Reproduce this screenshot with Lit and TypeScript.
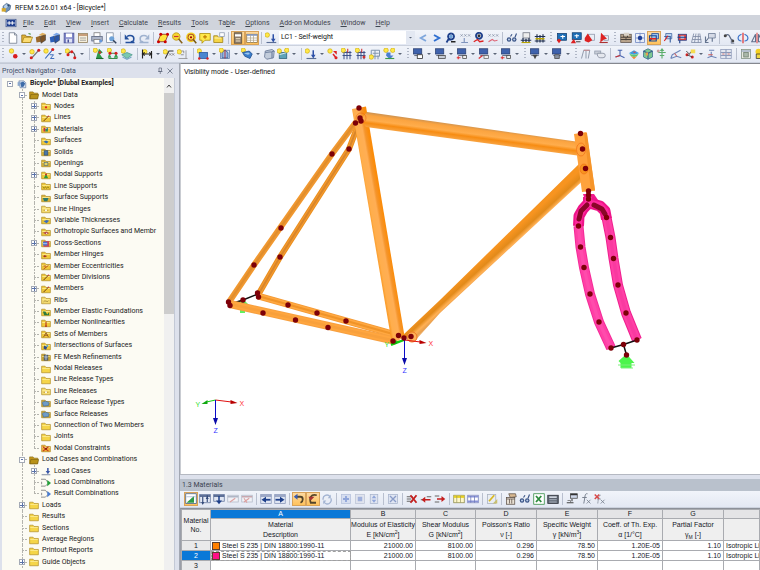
import { LitElement, html, svg, css, nothing } from "lit";
import { customElement, property } from "lit/decorators.js";

type Glyph = unknown;

/* Shared pieces of the 16 x 16 icon grid */
const star = (x = 3, y = 3): Glyph => svg`<circle cx=${x} cy=${y} r="3" fill="#ffe84a" stroke="#c9a800" stroke-width=".8"/>`;
const line = (d: string, c = "#3b4a66", w = 1.5): Glyph => svg`<path d=${d} stroke=${c} stroke-width=${w} fill="none"/>`;
const fill = (d: string, c: string, s = "none"): Glyph => svg`<path d=${d} fill=${c} stroke=${s}/>`;
const dot = (x: number, y: number, c = "#d81e1e", r = 2): Glyph => svg`<circle cx=${x} cy=${y} r=${r} fill=${c}/>`;
const box = (x: number, y: number, w: number, h: number, c: string, s = "none"): Glyph =>
  svg`<rect x=${x} y=${y} width=${w} height=${h} fill=${c} stroke=${s}/>`;
const folderBase = (c = "#f0c93a"): Glyph =>
  svg`<path d="M1 3.5h5.500l1.500 2h7v8.500h-14z" fill=${c} stroke="#a8841a"/><path d="M2 6.500h12v1.500h-12z" fill="#fbe98c"/>`;

const monitor = (low: Glyph): Glyph => [box(2, 1, 11, 7, "#3f62ac", "#2a3f70"), line("M3 10h10", "#6c7488", 1.5), low];
const loadGrid = (c: string): Glyph => [line("M2 6h12M2 10h12M4 4v11M8 4v11M12 4v11", c, 1.3), line("M9 1v5", "#c22", 1.3)];
const cube = (a: string, b: string, c: string): Glyph => [
  fill("M1 7l6-2 1 8-6 1z", a), fill("M5 4l5-3 5 2-4 3z", b), fill("M7 6l7-2v7l-6 4z", c, "#333a"),
];

const icons: Record<string, Glyph> = {
  app: [fill("M3 6l5-4 6 3-1 6-6 4-4-4z", "#6f92b8", "#3d5a80"), fill("M4 6l4-3 2 4-4 3z", "#b8d2ec"), box(1, 9, 6, 5, "#d8a928"), dot(11, 5, "#2d476b", 1.5)],
  mdi: [box(0, 2, 16, 12, "#fff", "#1f3a7a"), box(1, 3, 14, 10, "#1f3f8f"), line("M2 8h12M5 5v6M10 5v6", "#fff", 1.6)],
  page: [fill("M3 1h7l3 3v11h-10z", "#fff", "#6b7688"), line("M10 1v3h3", "#6b7688", 1)],
  open: [fill("M1 4h5l1 2h6v8h-12z", "#e3b43a", "#8a6b1a"), fill("M4 7h11.500l-3 7h-11z", "#fbdc74", "#a8841a"), line("M10 2l3 1", "#3c8f3c")],
  boxBrown: cube("#9b6a2c", "#e0b060", "#7e5426"),
  boxBlue: cube("#2c5fb8", "#7aa7ea", "#2a56a8"),
  save: [box(1.5, 1.5, 13, 13, "#7f86c8", "#4b5296"), box(4, 2, 8, 5, "#fff"), box(4, 9, 8, 5, "#dfe3f5"), box(6, 10, 2, 4, "#4b5296")],
  list: [box(2, 2, 12, 12, "#f6efdc", "#8b7752"), line("M2 4h12", "#b7835a", 2), line("M4 8h8M4 11h8", "#8b8b8b", 1)],
  print: [box(4, 1, 8, 5, "#fff", "#777"), box(1, 6, 14, 6, "#aeb6c9", "#5c6780"), box(4, 10, 8, 5, "#fff", "#777"), dot(13, 12, "#6699dd", 2)],
  preview: [fill("M2 1h9v13h-9z", "#fff", "#7c8799"), dot(9, 9, "#6fa3d8", 3.4), line("M11 11l4 4", "#31415c", 2)],
  undo: [line("M4 6c4-3 10-1 9 4c0 2-2 3-4 3M2 14h12", "#24509c", 2), fill("M1 3v7h6z", "#24509c")],
  redo: [line("M12 6c-4-3-10-1-9 4c0 2 2 3 4 3M2 14h12", "#9fb2cf", 2), fill("M15 3v7h-6z", "#9fb2cf")],
  para: [fill("M5 3h10l-4 10h-10z", "#ffe63d", "#7a1d1d"), dot(5, 3, "#c00"), dot(14, 3, "#c00"), dot(11, 13, "#c00"), dot(2, 13, "#c00")],
  lens: [dot(7, 6, "#f7d531", 5), line("M7 1a5 5 0 1 0 .1 0", "#b48f14", 1), line("M10 9l5 6", "#87631d", 2), line("M4 6h6", "#c33")],
  target: [dot(8, 7, "#f3d020", 6.5), dot(8, 7, "#b0552a", 4.600), dot(8, 7, "#ffe84a", 3.200), dot(8, 7, "#a00", 1.5), line("M11 10l4 5", "#7a5a10", 2)],
  note: [fill("M1 2h14v9h-7l-4 4v-4h-3z", "#ffe84a", "#a88a00"), line("M8 4v5M5.500 6.500h5", "#c07a00")],
  folderNew: [fill("M1 5h5l1 2h6v7h-12z", "#f5d548", "#9c7e10"), box(9, 1, 6, 5, "#fff", "#8b98ad"), line("M2 8h9", "#fff2a8")],
  calc: [box(3, 1, 10, 14, "#8c7c6a", "#5d4e3c"), box(4, 3, 8, 3, "#fff"), line("M5 9h6M5 12h6", "#f5e6c8", 1.6)],
  grid: [box(1, 3, 14, 11, "#fff", "#8b6f3d"), line("M1 4h14", "#7a93c4", 2), line("M1 8h14M1 11h14M6 4v10M10 4v10", "#b1a58c", 1)],
  loadArrow: [star(3, 4), line("M2 14h13", "#5b6f96"), line("M11 3v8", "#2c50a8", 2), fill("M8 9h6l-3 5z", "#2c50a8")],
  prev: [line("M12 4l-7 4l7 4", "#7fa7dc", 2.4)],
  next: [line("M4 4l7 4l-7 4", "#2f6fd0", 2.600)],
  mag: [line("M8 2a4 4 0 1 0 .1 0M5 9l-3 5", "#1d3f8a", 2.4), dot(8, 6, "#6fa3d8", 2.4), box(8, 12, 6, 2, "#222")],
  xxx: [line("M2 3l3 3M5 3l-3 3M7 3l3 3M10 3l-3 3M12 3l3 3M15 3l-3 3", "#8a94a8", 1), line("M3 14h9M7 8v6", "#7f94bd")],
  magRed: [line("M8 1a4 4 0 1 0 .1 0", "#1d3f8a", 2.4), dot(8, 5, "#333", 2), line("M1 13l5-3 3 3 5-1", "#d22", 1.8)],
  xxxRed: [line("M2 3l3 3M5 3l-3 3M7 3l3 3M10 3l-3 3M12 3l3 3M15 3l-3 3", "#8a94a8", 1), line("M2 13l5-3 3 2 4-1", "#d67", 1.5)],
  glasses: [dot(4, 10, "#3a5486", 3), dot(11, 10, "#3a5486", 3), dot(4, 10, "#b9cbe8", 1.4), dot(11, 10, "#b9cbe8", 1.4), line("M6 6l2-3M12 7l2-5", "#3a5486")],
  glassList: [box(4, 1, 9, 7, "#eee", "#6a6f7c"), line("M1 11h14M4 8v6M8 9v5M12 8v6", "#1f2e4f", 1.6), line("M2 14h12", "#b8a400")],
  meshGlass: [line("M1 6h14M1 12h14M4 3v11M8 4v10M12 3v11", "#1f2e4f", 1.5), line("M2 9h12", "#b8a400", 2)],
  winA: [box(2, 2, 12, 9, "#1d6fb8", "#0f3d6e"), line("M6 6h6M9 4v5", "#fff"), fill("M1 11l3-2 3 2-3 4z", "#d22")],
  winB: [box(3, 1, 12, 9, "#1d6fb8", "#0f3d6e"), line("M6 5h6M9 3v5", "#fff"), fill("M1 15l4-6 3 6z", "#d22"), line("M8 13h6", "#555")],
  redA: [box(6, 3, 8, 8, "#e9edf5", "#8a94a8"), fill("M1 8l4-6 4 6 2 3-5 3-5-2z", "#d22")],
  redB: [box(8, 5, 6, 6, "#e9edf5", "#8a94a8"), fill("M4 1l8 8-4 1-5 4z", "#d22"), line("M2 14h11", "#a33")],
  brick: [box(1, 3, 14, 11, "#b9a48c", "#5d5249"), line("M1 7h14M1 10h14M5 3v4M10 3v4M8 7v4", "#4a423c", 1.3), box(5, 1, 7, 4, "#d9d2c8")],
  gridDots: [line("M2 2h12M2 8h12M2 14h12M2 2v12M8 1v14M14 2v12", "#7e93c8", 1.2), dot(8, 8, "#1d3f9a", 3)],
  viewBlue: [fill("M5 2h9v7h-9z", "#9ec3ec", "#184a96"), line("M2 5h9v7h-9zM2 12l3-3", "#184a96"), line("M2 9h9", "#d22", 2)],
  viewRed: [fill("M5 2h8v7h-8z", "#bcd4ef", "#3b62a2"), line("M3 6h8v8", "#3b62a2"), line("M3 12l5-7", "#d22")],
  viewX: [box(3, 3, 11, 8, "#e6403a", "#1d3f8a"), box(6, 5, 5, 4, "#bcd4ef"), line("M5 11v4M2 7h12", "#1d3f8a")],
  mesh: [line("M2 14l3-12M6 14l2-12M11 14V2M15 14l-2-12M2 14h13M3 10h12M4 6h10", "#7e8ba4", 1.1)],
  persp: [fill("M6 2h9v6h-9z", "#d5dae6", "#64748f"), line("M2 13l4-5M2 6v8h4M11 8v5", "#64748f")],
  curve: [line("M3 5c8-6 5 8 11 6", "#5d6a84", 1.6), dot(3, 5, "#444"), dot(13, 12, "#444"), line("M11 11v4h4", "#5d6a84", 1)],
  rot: [line("M8 1v14", "#d22"), line("M6 3c-7 3-5 9 0 9M10 3c7 3 5 9 0 9", "#3b72c8", 1.6)],
  mirror: [line("M8 1v14", "#d22", 1.2), line("M6 3v10h-5zM10 3v10h5z", "#61708c", 1.4)],
  node: [star(6, 4), dot(11, 11, "#d81e1e", 3)],
  line1: [star(4, 5), line("M3 14L13 3", "#777"), dot(3, 13), dot(13, 3)],
  line2: [star(4, 4), line("M3 14L13 2", "#2f62b8"), line("M9 9h5l-4 5h5", "#2f62b8", 1.2), dot(13, 2)],
  arc: [star(3, 4), line("M4 9C6 2 14 5 13 13", "#555"), dot(4, 9), dot(9, 5), dot(13, 13)],
  supp1: [star(3, 3), fill("M8 1l5 5-4 2 4 6h-9l2-7z", "#2f9a48"), dot(9, 6, "#d22", 1.6), line("M4 14h10", "#1d6b30")],
  supp2: [star(3, 3), fill("M3 7l3 6h-5zM12 7l3 6h-6z", "#3aa052"), line("M4 7h8M2 14h12", "#3b8a48"), dot(4, 7), dot(12, 7)],
  supp3: [star(3, 4), fill("M1 9l7-3 7 3-7 5z", "#7cc8b0", "#4f9a8c"), line("M2 12l6 3 6-3", "#7aa7c8")],
  dim: [star(5, 5), line("M2 2v12M14 4v10M2 8h12", "#222"), line("M5 6l-3 2 3 2M11 6l3 2-3 2", "#222")],
  dimX: [star(3, 5), line("M3 14L8 4h6", "#333"), line("M8 7l3 3M11 7l-3 3M12 7l3 3M15 7l-3 3", "#777", 1)],
  dimG: [star(3, 5), line("M2 14h12M12 3v11", "#888", 1), line("M6 4h3v3M5 9h4", "#777", 1)],
  surf: [star(3, 4), box(3, 6, 11, 8, "#4a86cf", "#24539a"), dot(14, 14, "#d22", 1.6), dot(3, 14, "#d22", 1.6)],
  solid: [box(2, 3, 12, 11, "#dfe7f3", "#5d7aa8"), fill("M4 6l4-3 4 3v7h-8z", "#8fb2e0", "#33578f"), line("M8 2v12", "#c22", 1), star(3, 3)],
  open2: [star(3, 3), fill("M2 6l9-2 4 4-3 6-7-3z", "#3a7cc8", "#1e4c8c"), fill("M4 7l6-1 2 2-3 1z", "#9cc7ef")],
  solid2: [fill("M3 4l9-2 3 2-1 9-9 2-3-3z", "#c2ccdb", "#5d6f8e"), line("M3 6l9-1 3-1M12 5v9", "#6d7f9e")],
  solidStar: [box(3, 6, 10, 8, "#5fa3b8", "#2c5f78"), line("M3 9l10-3", "#fff", 1), star(3, 4), star(13, 3)],
  force: [star(4, 4), line("M8 8l4 5", "#d22", 2), fill("M8 4h5v5z", "#d22"), dot(12, 13, "#d22")],
  lg1: [loadGrid("#3b4f88"), star()],
  lg2: [loadGrid("#3b4f88"), dot(12, 12, "#c33"), star()],
  lg3: [line("M3 3h11v8h-11zM5 7h8M8 3v12M12 10v5", "#7f94ad", 1.3), star(3, 12)],
  lg4: [star(4, 3), star(13, 3), fill("M5 6h5v4h4l-5 5-5-5z", "#4a7fd0"), line("M3 14h12", "#3a9a48")],
  mon1: monitor(box(7, 9, 7, 5, "#fff", "#222")),
  mon2: monitor(box(6, 10, 9, 4, "#c7ccd6", "#444")),
  mon3: monitor([box(9, 10, 5, 4, "#eee", "#444"), line("M3 11v4M1 13h5", "#d33")]),
  mon4: monitor([box(8, 10, 6, 4, "#eee", "#666"), line("M1 14l5-4", "#d33")]),
  mon5: monitor(fill("M5 9h6l-3 6z", "#444")),
  mon6: monitor(box(5, 9, 6, 5, "#8b93a2", "#444")),
  frame: [line("M2 14L5 3h8l-2 11M8 14V4", "#8f99aa", 1.3), line("M5 3h8", "#c77", 1)],
  pill: [box(1, 4, 8, 4, "#c9ced8", "#8f99aa"), fill("M5 7h7a3 3 0 0 1 0 6h-3a4 4 0 0 1-4-6z", "#e4e7ee", "#7f8798")],
  axes: [line("M2 12l6-2 6 3M8 3v8M5 3h6", "#4a66b0"), line("M2 12l6-2", "#c33")],
  rainbow: [fill("M1 7l7-4 7 4-7 2z", "#3f9de0"), fill("M2 8l6 1 6-1-2 3-4 1-4-1z", "#5cc870"), fill("M4 11l4 1 4-1-4 4z", "#f08c3a"), fill("M6 5h5l-2 2z", "#e04a4a")],
  cubeGreen: [fill("M2 4l6-3 6 3v8l-6 3-6-3z", "#7cc890", "#3a6b8f"), line("M2 4l6 3 6-3M8 7v8", "#3a5f8f"), box(5, 6, 3, 4, "#e8a04a")],
  tree: [line("M8 3v11M3 6h10M5 10h6", "#5cae6c"), fill("M8 0l3 4h-6z", "#5cae6c"), dot(3, 4, "#c9a0a0")],
  slope: [line("M3 9l11-6M1 14l8-3 6 2M3 9l-2 5", "#6d85b8"), line("M6 7l3 4", "#c66")],
  spark: [dot(4, 9), dot(11, 12), line("M4 9l7 3M3 4l4 4M9 5l-2 4", "#444", 1.2), box(9, 2, 6, 5, "#f5dc50")],
  axes2: [line("M2 13l5-2 7 2M7 5v6M4 3h7", "#6d85b8"), line("M3 9h6", "#c66")],
  table2: [box(1, 2, 14, 12, "#e3e7f0", "#8c98b8"), line("M1 6h14M1 10h14M8 2v12", "#8c98b8"), line("M3 8h3M10 8h3", "#c77")],
  panel: [box(2, 2, 12, 12, "#e7e9e0", "#7f8f7f"), box(5, 6, 6, 6, "#aab8aa", "#6b7b6b"), line("M2 4h12", "#8f9fbf")],
  bulb: [dot(6, 5, "#f5d020", 4), fill("M3 8h10l2 6h-12z", "#f0d840", "#333")],
  tEdit: [box(1, 1, 14, 13, "#fff", "#3b5d8f"), fill("M2 13L12 4v9z", "#2f9a48"), line("M2 5h12", "#9fb2cf", 1)],
  tCol: [box(1, 2, 14, 11, "#e5eaf5", "#5d7099"), line("M1 4h14", "#334a7a", 2), line("M5 5v9M11 3v9", "#334a7a"), fill("M3 12l2 4 2-4zM9 8l2-4 2 4z", "#334a7a")],
  tDown: [box(1, 2, 14, 9, "#dfe5f2", "#5d7099"), line("M1 4h14", "#334a7a", 2), line("M8 4v8", "#1d3f8a", 2), fill("M4 10h8l-4 5z", "#1d3f8a")],
  tRow: [box(1, 3, 14, 9, "#f0f2f7", "#b0b7c6"), line("M1 5h14", "#b0b7c6", 2), line("M4 12l7-5", "#dca0a0")],
  tRowX: [box(1, 3, 14, 9, "#f0f2f7", "#b0b7c6"), line("M1 5h14", "#c8a8b0", 2), line("M4 12l7-5M4 7l4 6", "#dca0a0")],
  tLeft: [box(1, 2, 14, 12, "#dfe5f2", "#8794b8"), line("M1 4h14", "#8794b8", 2), line("M5 9h9", "#1d3f8a", 2.4), fill("M8 5v8l-6-4z", "#1d3f8a")],
  tRight: [box(1, 2, 14, 12, "#dfe5f2", "#8794b8"), line("M1 4h14", "#8794b8", 2), line("M2 9h9", "#1d3f8a", 2.4), fill("M8 5v8l6-4z", "#1d3f8a")],
  swirlA: [line("M3 5h7c4 0 4 6 0 8", "#54452a", 2.4), fill("M6 1v8l-5-4z", "#3b5db0")],
  swirlB: [line("M13 3c-8-2-10 4-8 10h7", "#54452a", 2.4), fill("M2 5h8l-5 5z", "#a83232")],
  cycle: [line("M3 9a5 5 0 0 1 9-4M13 7a5 5 0 0 1-9 5", "#a3b4d2", 1.8), fill("M13 2v5h-4zM3 15v-5h4z", "#a3b4d2")],
  pPlus: [box(2, 2, 12, 12, "#d6def0", "#b4c0dc"), line("M8 4v8M4 8h8", "#8fa5da", 2.4)],
  pBars: [box(2, 2, 12, 12, "#e0e4ee", "#bcc4d6"), box(5, 5, 6, 6, "#9fb0dc")],
  pSort: [box(3, 2, 10, 12, "#dfe4f0", "#a8b4cc"), fill("M8 3l3 4h-6zM8 13l3-4h-6z", "#8fa5da")],
  pX: [box(2, 2, 12, 12, "#dfe5f2", "#a8b4cc"), line("M4 4l8 8M12 4l-8 8", "#8a9cc8", 1.8)],
  rowDel: [line("M1 5h8M1 8h6M1 11h8", "#666", 1.6), line("M6 3l8 10M14 3L6 13", "#c41e1e", 2.4)],
  rowIn: [line("M9 5h6M1 9h4", "#666", 1.6), line("M6 9h8", "#c41e1e", 2), fill("M7 5v8l-5-4z", "#c41e1e")],
  rowOut: [line("M1 4h6M1 12h6", "#666", 1.6), line("M4 8h8", "#c41e1e", 2), fill("M10 4v8l5-4z", "#c41e1e")],
  tYel: [box(1, 3, 14, 10, "#fff8c8", "#8a8a4a"), line("M1 5h14", "#e8d020", 3), line("M5 4v9M10 4v9", "#9c9c6a", 1)],
  tBlu: [box(1, 3, 14, 10, "#fff", "#6d78b8"), line("M1 5h14M1 11h14", "#8a94d8", 2), line("M5 4v9M10 4v9", "#6d78b8", 1)],
  pen: [box(2, 2, 11, 12, "#e9edf2", "#a7b0bf"), line("M4 11l7-8", "#d8b820", 2.4), fill("M9 14h6v-6z", "#c8c070")],
  hand: [box(2, 6, 11, 9, "#e8e0d4", "#5d5248"), line("M2 8h11M6 8v6M9 8v6", "#5d5248", 1), fill("M5 1h9l1 4-8 1z", "#d8b890", "#5d5248")],
  excel: [box(1, 1, 14, 14, "#fff", "#2a8a3c"), line("M4 4l7 8M11 4l-7 8", "#2a8a3c", 2.4)],
  calc2: [box(1, 3, 14, 11, "#5d6470", "#2c3038"), line("M3 5.500h10", "#dfe5ee", 2), line("M3 9h10M3 12h10", "#b8c0cc", 1.2)],
  tFx: [box(6, 1, 9, 6, "#cfd8ea", "#444"), line("M6 2h9", "#333", 2), line("M8 8v3M1 13h9", "#444"), line("M2 10h4v3", "#666", 1)],
  fx: [line("M10 1c-4-1-3 4-5 13M3 6h6", "#777f8e", 1.3), line("M9 9l5 5M14 9l-5 5", "#777f8e", 1.1)],
  fxX: [line("M9 3c-3-1-3 4-4 11M4 8h5", "#9aa1ae", 1.3), line("M9 9l5 5M14 9l-5 5", "#777f8e", 1.1), line("M1 2l6 6M7 2L1 8", "#d84a4a", 2)],
  /* navigator */
  model: [fill("M3 3h8l3 3v8h-9z", "#dfe8f4", "#54709c"), fill("M5 6l5-2 3 3-2 5-4 1z", "#3d6ca8"), box(1, 5, 4, 6, "#8ca8cc")],
  folder: folderBase("#f5d548"),
  folderOpen: [fill("M1 3h5.500l1.500 2h6v9h-13z", "#c59a1e", "#8a6b12"), fill("M3 7h12.500l-2 7h-12z", "#b8921a", "#7a5e10")],
  fNode: [folderBase(), dot(8, 10, "#d22", 1.8)],
  fLine: [folderBase(), line("M4 13l8-8", "#6b3c10", 1.6), dot(12, 5, "#c44", 1.2)],
  fMat: [folderBase(), box(4, 6, 3, 6, "#c8323c"), box(7, 8, 4, 4, "#2c8a5c"), box(9, 6, 2, 3, "#2c62b8")],
  fSurf: [folderBase(), fill("M4 9l4-2 4 2-3 3z", "#2c6cb8")],
  fSolid: [folderBase("#d6b23a"), box(5, 6, 6, 7, "#4a78a8", "#2a4a70")],
  fOpen: [folderBase("#d6b23a"), box(5, 7, 6, 5, "#e3d36a", "#4a6a80")],
  fSupp: [folderBase(), fill("M8 6l3.500 7h-7z", "#2c9a3c"), dot(8, 7, "#c22", 1.5)],
  fLSup: [folderBase(), line("M3 9l2 3 2-3 2 3 2-3 2 3", "#8a7a10", 1.2)],
  fSSup: [folderBase("#d6b23a"), fill("M3 8h9l-2 5h-5z", "#2c7a6c")],
  fHinge: [folderBase("#f5dc70"), line("M4 10h8", "#b08828", 1.2), dot(8, 10, "#fff", 1.6)],
  fThick: [folderBase("#e8c63a"), fill("M4 10l5-2 4 1-4 4z", "#3a6cc0")],
  fOrtho: [folderBase("#e8c63a"), fill("M3 9l6-2 4 3-5 2z", "#b84a4a"), dot(9, 10, "#fff", 1)],
  fCross: [folderBase(), box(4, 5, 9, 9, "#c8465a"), box(3, 6, 7, 6, "#4a78d0"), line("M3 9h7", "#dfe8ff", 1)],
  fMH: [folderBase(), line("M4 10h5", "#a02c2c", 1.4), dot(6, 10, "#a02c2c", 1.8)],
  fEcc: [folderBase(), line("M4 13l8-6M4 8h4", "#b84a1c", 1.5)],
  fRib: [folderBase("#f5dc70"), line("M4 11c3-4 6 2 8-2", "#9a8438", 1.3)],
  fEl: [folderBase(), fill("M3 7h4l3 5 3-4v5h-8z", "#2c7a3c")],
  fNon: [folderBase(), line("M8 6v7", "#b83a1c", 1.8), dot(8, 13, "#b83a1c", 1.4)],
  fSets: [folderBase(), line("M4 13l4-7 4 7M6 10h5", "#8a4a1c", 1.3)],
  fInt: [folderBase(), fill("M5 7l5 3-2 4-4-2z", "#2c4a88"), dot(10, 8, "#4aa0d8", 1.6)],
  fFE: [folderBase("#c9a83a"), box(5, 5, 6, 8, "#6f7f90", "#39465c"), line("M5 8h6M8 5v8", "#c4cfdd", 1)],
  fBlue: [folderBase("#c9a83a"), fill("M2 7l5-2 6 2-1 5-8 1z", "#6d9cc8", "#446a90")],
  fCon: [folderBase("#f0b43a"), line("M3 6l9 7M12 6l-9 7", "#c83a1c", 1.8), dot(8, 9, "#7a1c0c", 1.6)],
  lcase: [line("M1 14h14", "#7f8aa0", 1.6), line("M11 3v7", "#3a57a8", 2.4), fill("M7.500 8h7l-3.500 5z", "#3a57a8")],
  combG: [line("M0 2h7l4 5M0 13h7l4-4M1 6v4", "#777", 1.300), fill("M10 3l6 5-6 5z", "#25a03a")],
  combB: [line("M0 2h7l4 5M0 13h7l4-4M1 6v4", "#777", 1.300), fill("M10 3l6 5-6 5z", "#4a7cd0")],
  pin: [line("M6 2h5v7h-5zM4 9h9M8.500 9v5", "#5b6478", 1.4)],
  close: [line("M3 3l10 10M13 3L3 13", "#5b6478", 1.5)],
};

const icon = (name: string) => html`<svg class="icon" viewBox="0 0 16 16" aria-hidden="true">${icons[name]}</svg>`;

/* "|" separator, ":" grip, "v" drop-down arrow, "*" prefix marks a pressed button, "@" the load case list */
const mainBar = ": page open boxBrown boxBlue save list print preview | undo redo | para lens target note folderNew | *calc *grid | loadArrow @ prev next mag xxx magRed xxxRed | glasses glassList meshGlass : winA winB redA redB : brick gridDots *viewBlue viewRed viewX mesh persp | curve rot mirror".split(" ");
const editBar = ": node v line1 line2 v arc v | supp1 supp2 supp3 | dim v dimX dimG | surf v solid v open2 v solid2 solidStar v | loadArrow v force lg1 lg2 lg3 lg4 v : mon1 v mon2 v mon3 v mon4 v mon3 v : mon5 v mon6 v : frame pill | axes rainbow cubeGreen tree slope spark v axes2 table2 | panel bulb".split(" ");
const tableBar = ": *tEdit tCol tDown tRow tRowX | tLeft tRight | *swirlA *swirlB cycle | pPlus pBars pSort | pX | rowDel rowIn rowOut | tYel tBlu | pen | hand glasses excel calc2 | tFx fx fxX".split(" ");

@customElement("tool-bar")
class ToolBar extends LitElement {
  @property({ attribute: false }) items: string[] = [];

  static styles = css`
    :host { display: flex; align-items: center; overflow: hidden; box-sizing: border-box; height: 16px; --sep: 5px; --grip: 8px;
      background: linear-gradient(#f1f4fa, #e3e8f3); border-bottom: 1px solid #ccd2de; }
    :host([dense]) { height: 17px; --sep: 6px; --grip: 7px; }
    :host([inset]) { height: 17px; }
    button { display: flex; align-items: center; justify-content: center; flex: none; box-sizing: border-box; width: 14px; height: 14px;
      padding: 0; border: 1px solid transparent; background: none; }
    button.on { background: linear-gradient(#fdd9a0, #ffc25c); border-color: #d9a35a; }
    button.drop { width: 8px; }
    .icon { flex: none; width: 12px; height: 12px; }
    .tiny { flex: none; width: 4px; height: 2px; background: #5b6577; clip-path: polygon(0 0, 100% 0, 50% 100%); }
    .sep { flex: none; width: var(--sep); height: 12px; background: linear-gradient(#b9c0cf, #b9c0cf) center / 1px 100% no-repeat; }
    .grip { flex: none; width: var(--grip); height: 12px;
      background: repeating-linear-gradient(#b0b7c6 0 1px, transparent 1px 3px) center / 2px 100% no-repeat; }
    .grip.first { width: 6px; }
    :host([inset]) .grip.first { width: 4px; background: none; }
    .pick { position: relative; display: flex; flex: none; width: 136px; height: 13px; margin: 0 1px; }
    .pick select { flex: 1; appearance: none; border: 0; margin: 0; padding: 0 10px 0 2px; background: #fff; border-radius: 0;
      font: 7px/13px Roboto, "Open Sans", sans-serif; color: #111; }
    .pick .well { position: absolute; right: 0; top: 0; display: flex; align-items: center; justify-content: center;
      width: 9px; height: 13px; background: #e3e8f2; pointer-events: none; }
  `;

  private item(name: string, i: number) {
    if (name === "|") return html`<span class="sep"></span>`;
    if (name === ":") return html`<span class="grip ${i === 0 ? "first" : ""}"></span>`;
    if (name === "v") return html`<button class="drop" aria-label="More"><span class="tiny"></span></button>`;
    if (name === "@")
      return html`<label class="pick"><select aria-label="Load case"><option>LC1 - Self-weight</option></select>
        <span class="well"><span class="tiny"></span></span></label>`;
    const on = name.startsWith("*");
    const key = on ? name.slice(1) : name;
    return html`<button class=${on ? "on" : nothing} aria-label=${key}>${icon(key)}</button>`;
  }

  render() {
    return this.items.map((n, i) => this.item(n, i));
  }
}

type Row = [depth: number, sign: string, glyph: string, text: string];
const rows: Row[] = [
  [0, "-", "model", "Bicycle* [Dlubal Examples]"],
  [1, "-", "folderOpen", "Model Data"],
  [2, "+", "fNode", "Nodes"],
  [2, "+", "fLine", "Lines"],
  [2, "+", "fMat", "Materials"],
  [2, "", "fSurf", "Surfaces"],
  [2, "", "fSolid", "Solids"],
  [2, "", "fOpen", "Openings"],
  [2, "+", "fSupp", "Nodal Supports"],
  [2, "", "fLSup", "Line Supports"],
  [2, "", "fSSup", "Surface Supports"],
  [2, "", "fHinge", "Line Hinges"],
  [2, "", "fThick", "Variable Thicknesses"],
  [2, "", "fOrtho", "Orthotropic Surfaces and Membr"],
  [2, "+", "fCross", "Cross-Sections"],
  [2, "", "fMH", "Member Hinges"],
  [2, "", "fEcc", "Member Eccentricities"],
  [2, "", "fLine", "Member Divisions"],
  [2, "+", "fLine", "Members"],
  [2, "", "fRib", "Ribs"],
  [2, "", "fEl", "Member Elastic Foundations"],
  [2, "", "fNon", "Member Nonlinearities"],
  [2, "", "fSets", "Sets of Members"],
  [2, "", "fInt", "Intersections of Surfaces"],
  [2, "", "fFE", "FE Mesh Refinements"],
  [2, "", "folder", "Nodal Releases"],
  [2, "", "folder", "Line Release Types"],
  [2, "", "fHinge", "Line Releases"],
  [2, "", "fBlue", "Surface Release Types"],
  [2, "", "fBlue", "Surface Releases"],
  [2, "", "folder", "Connection of Two Members"],
  [2, "", "folder", "Joints"],
  [2, "", "fCon", "Nodal Constraints"],
  [1, "-", "folderOpen", "Load Cases and Combinations"],
  [2, "+", "lcase", "Load Cases"],
  [2, "", "combG", "Load Combinations"],
  [2, "", "combB", "Result Combinations"],
  [1, "+", "folder", "Loads"],
  [1, "", "folder", "Results"],
  [1, "", "folder", "Sections"],
  [1, "", "folder", "Average Regions"],
  [1, "", "folder", "Printout Reports"],
  [1, "+", "folder", "Guide Objects"],
];

@customElement("project-navigator")
class ProjectNavigator extends LitElement {
  static styles = css`
    :host { display: flex; flex-direction: column; min-height: 0; background: #dde1ec; border-right: 1px solid #a3a8b3;
      font: 7px/11px Roboto, "Open Sans", sans-serif; color: #1a1a1a; }
    header { display: flex; align-items: center; height: 14px; padding: 0 4px 0 2px; border-top: 1px solid #c3c9d6; color: #44506a; }
    header span { flex: 1; }
    header button { display: flex; padding: 0 1px; border: 0; background: none; }
    .icon { width: 10px; height: 10px; flex: none; }
    header .icon { width: 8px; height: 8px; }
    .body { flex: 1; min-height: 0; display: flex; margin: 0 4px 0 2px; border-right: 1px solid #c3c9d6; background: #fcfbf3; }
    .tree { flex: 1; min-width: 0; overflow: hidden; display: grid; grid-auto-rows: 1fr; margin: 0; padding: 0 0 2px 2px; list-style: none; }
    .row { display: flex; align-items: center; min-height: 0; white-space: nowrap; }
    .row.root { font-weight: 700; }
    .cell { flex: none; align-self: stretch; width: 12px; display: flex; align-items: center; justify-content: center; }
    .rail, .knot { background: repeating-linear-gradient(#b4b4ae 0 2px, transparent 2px 3px) 6px 0 / 1px 100% no-repeat; }
    .knot { background:
      repeating-linear-gradient(#b4b4ae 0 2px, transparent 2px 3px) 6px 0 / 1px 100% no-repeat,
      repeating-linear-gradient(90deg, #b4b4ae 0 2px, transparent 2px 3px) 6px 50% / 6px 1px no-repeat; }
    .knot.end { background-size: 1px 50%, 6px 1px; }
    .sign { box-sizing: border-box; width: 6px; height: 6px; border: 1px solid #a4aab6; background:
      linear-gradient(#5a72a8, #5a72a8) center / 2px 1px no-repeat, #fff; }
    .sign.plus { background: linear-gradient(#5a72a8, #5a72a8) center / 4px 1px no-repeat,
      linear-gradient(#5a72a8, #5a72a8) center / 1px 4px no-repeat, #fff; }
    .text { padding-left: 2px; }
    .scroll { flex: none; width: 10px; display: flex; flex-direction: column; background: #f0f0f0; }
    .up { height: 15px; display: flex; align-items: center; justify-content: center; }
    .up svg { width: 6px; height: 4px; }
    .thumb { height: 45%; background: #cdcdcd; }
  `;

  render() {
    return html`
      <header>
        <span>Project Navigator - Data</span>
        <button aria-label="Auto hide">${icon("pin")}</button>
        <button aria-label="Close">${icon("close")}</button>
      </header>
      <div class="body">
        <ul class="tree">
          ${rows.map(([depth, sign, glyph, text], i) => {
            const last = (rows[i + 1]?.[0] ?? 1) < depth;
            return html`<li class="row ${depth === 0 ? "root" : ""}">
              ${depth > 0 ? html`<span class="cell"></span>` : nothing}
              ${depth > 1 ? html`<span class="cell rail"></span>` : nothing}
              <span class="cell ${depth > 0 ? "knot" : ""} ${last && depth > 1 ? "end" : ""}">
                ${sign ? html`<span class="sign ${sign === "+" ? "plus" : ""}"></span>` : nothing}
              </span>
              <span class="cell">${icon(glyph)}</span><span class="text">${text}</span>
            </li>`;
          })}
        </ul>
        <div class="scroll">
          <div class="up"><svg viewBox="0 0 6 4"><path d="M1 3.500L3 1l2 2.500" fill="none" stroke="#444"/></svg></div>
          <div class="thumb"></div>
        </div>
      </div>`;
  }
}

const orangeNodes = [
  [359, 108], [360, 118], [361, 121], [355.5, 123], [349, 149], [332, 154], [281, 228], [254, 265], [280, 257],
  [228.5, 302], [230, 305.5], [243, 300], [257.5, 293], [258.5, 297], [263, 313], [295.5, 320], [328, 327.5],
  [288, 305], [317, 313], [346, 321], [393, 341], [398.5, 335.5], [404, 338], [411, 336.5],
  [580.5, 133.5], [582.5, 149], [585.5, 168.5],
];
const forkNodes = [
  [588.5, 191], [588.5, 195], [588.5, 199], [578.5, 226], [580.5, 247], [584, 267.5], [590, 294], [599, 322], [611, 348],
  [606.5, 217.5], [610.5, 237.5], [613.5, 258.5], [618, 285], [626, 313], [637, 340], [623.5, 344.5], [626.5, 355],
];
const leftBlade = "M578.5 226L580.5 247L584 267.5L590 294L599 322L611 348";
const rightBlade = "M606.5 217.5L610.5 237.5L613.5 258.5L618 285L626 313L637 340";
const crown = "M588.5 197v6L583 209L579 216L578.5 226M589 203L600 206L605 211L606.5 219";

const triad = (x: number, y: number) => svg`
  <g transform="translate(${x} ${y})" font-size="7" font-family="Liberation Sans, Arial, sans-serif">
    <path d="M0 0L16 2" stroke="#e01010"/><path d="M22 3l-7-3v4z" fill="#b80000"/>
    <path d="M0 0L-9 2" stroke="#10d010"/><path d="M-14 4l6-4v4z" fill="#10a810"/>
    <path d="M0 0V19" stroke="#0a0ac8"/><path d="M0 25l-2.500-7h5z" fill="#0a0aa8"/>
    <text x="24" y="6" fill="#ff3030">X</text><text x="-20" y="7" fill="#30e030">Y</text><text x="-2" y="33" fill="#3030ff">Z</text>
  </g>`;

/* A tube seen from the side: rim, body, and a band along its middle */
const tube = (d: string, w: number, rim: string, body: string, band: string) => svg`
  <path d=${d} stroke=${rim} stroke-width=${w} fill="none" stroke-linejoin="round"/>
  <path d=${d} stroke=${body} stroke-width=${w - 2} fill="none" stroke-linejoin="round"/>
  <path d=${d} stroke=${band} stroke-width=${w / 3} fill="none" stroke-linejoin="round"/>`;

@customElement("model-view")
class ModelView extends LitElement {
  static styles = css`
    :host { display: flex; flex-direction: column; min-height: 0; position: relative; overflow: hidden; background: #fff;
      border-top: 1px solid #85888f; border-left: 1px solid #c9ccd2; }
    .mode { position: absolute; left: 3px; top: 3px; font: 7px/10px "Liberation Sans", Arial, sans-serif; color: #111; }
    .scene { flex: 1; min-height: 0; width: 100%; display: block; }
  `;

  render() {
    return html`
      <span class="mode">Visibility mode - User-defined</span>
      <svg class="scene" viewBox="181 64 579 380" preserveAspectRatio="xMinYMin meet" role="img" aria-label="Bicycle frame model">
        <defs>
          <linearGradient id="top" gradientUnits="userSpaceOnUse" x1="470" y1="126" x2="468" y2="141">
            <stop offset="0" stop-color="#cf9350"/><stop offset=".2" stop-color="#fba440"/><stop offset=".5" stop-color="#ffad4c"/>
            <stop offset=".7" stop-color="#f78c12"/><stop offset="1" stop-color="#f8a545"/>
          </linearGradient>
          <linearGradient id="down" gradientUnits="userSpaceOnUse" x1="490" y1="252" x2="500" y2="263">
            <stop offset="0" stop-color="#f79420"/><stop offset=".4" stop-color="#e28a1a"/><stop offset=".65" stop-color="#ffb054"/>
            <stop offset=".85" stop-color="#e8a050"/><stop offset="1" stop-color="#f0bc80"/>
          </linearGradient>
          <linearGradient id="seat" gradientUnits="userSpaceOnUse" x1="372" y1="232" x2="386" y2="229.5">
            <stop offset="0" stop-color="#f9961f"/><stop offset=".2" stop-color="#ffae4c"/><stop offset=".6" stop-color="#ffae55"/>
            <stop offset=".75" stop-color="#f5952c"/><stop offset="1" stop-color="#fb8c0a"/>
          </linearGradient>
        </defs>
        <path d="M243 299l7 7-3 1h-2v6h-5v-6l-6-3z" fill="#4ff04f" opacity=".9"/>
        <path d="M230 304L243 300L258 294" stroke="#111" stroke-width="1.5" fill="none"/>
        ${tube("M360 120L349 149L280 257L258 295", 6, "#ea8f1e", "#f59a30", "#d8862a")}
        ${tube("M356 122L332 154L254 265L229 302", 6, "#f29a30", "#ee9632", "#e08e2c")}
        ${tube("M258 296L400 336", 7, "#f39a35", "#ffa841", "#f09428")}
        ${tube("M230 304L396 341", 8, "#f7a040", "#ffa63f", "#f8a03c")}
        <path d="M580 163L440 300L403 335L414 342L440 313L550 211L588 176z" fill="url(#down)"/>
        <circle cx="412" cy="337" r="5" fill="#ffb05a" stroke="#ee7a20"/>
        <path d="M352 109L366 106.5L404.5 336L398 341L391 338z" fill="url(#seat)"/>
        <path d="M367 112L576 141.5L581 156L366 127L360 120z" fill="url(#top)"/>
        <path d="M574 134L586.5 132L595 190.5L582 192z" fill="#ffa23c"/>
        <path d="M584 133h3L595 190.5h-4z" fill="#f6952a"/>
        <ellipse cx="581" cy="149.500" rx="4.500" ry="6.500" fill="none" stroke="#ee6a10" stroke-width=".6"/>
        <ellipse cx="584" cy="169" rx="4" ry="5" fill="#f7941f" stroke="#ee6a10" stroke-width=".6"/>
        <circle cx="361" cy="118" r="5" fill="none" stroke="#ee6a10" stroke-width=".6"/>
        ${tube(leftBlade, 10, "#f52a98", "#ff40a6", "#ff4cac")}
        ${tube(rightBlade, 10, "#f0208f", "#ff40a6", "#f93aa0")}
        <path d="M583 194h11l6 9h-14z" fill="#f0188c"/>
        <path d=${crown} stroke="#ee1488" stroke-width="11" fill="none" stroke-linejoin="round"/>
        <path d=${crown} stroke="#ff2a9e" stroke-width="7" fill="none" stroke-linejoin="round"/>
        <path d="M587 205L581 211L579 219M594 205L602 209L605 214" stroke="#8a0628" stroke-width="5" fill="none" stroke-linecap="round" stroke-linejoin="round"/>
        <path d="M611 348L623.5 344.5L637 340M623.5 344.5L626.5 355" stroke="#111" stroke-width="1.5" fill="none"/>
        <path d="M626.5 354l8 9h-3v5h-11v-5l-2-2z" fill="#4cf54c"/>
        <path d="M618 365h17M621 368h12" stroke="#7cf07c"/>
        <path d="M404 340L391 345" stroke="#10d010" stroke-width="2"/>
        ${triad(404.5, 340)} ${triad(215.5, 400)}
        ${[...orangeNodes, ...forkNodes].map(([x, y]) => svg`<circle cx=${x} cy=${y} r="2.700" fill="#7d0008"/>`)}
      </svg>`;
  }
}

@customElement("material-table")
class MaterialTable extends LitElement {
  static styles = css`
    :host { display: block; overflow: hidden; background: #fff; border-top: 1px solid #8c9099; border-left: 1px solid #9a9ea8;
      font: 7px/10px "Liberation Sans", Arial, sans-serif; color: #15181f; }
    table { width: 100%; table-layout: fixed; border-collapse: collapse; }
    .no { width: 29px; } .a { width: 140px; } .w65 { width: 65px; } .w60 { width: 60px; } .w61 { width: 61px; }
    th, td { padding: 0 2px; border: 1px solid #a9abb0; font-weight: 400; white-space: nowrap; overflow: hidden; box-sizing: border-box; }
    th { background: #efefef; text-align: center; padding: 0; }
    .letters th { height: 9px; line-height: 8px; background: #e4e4e6; }
    .letters th.corner { background: #efefef; line-height: 9px; }
    .letters th.sel, tbody th.sel { background: #0a78d7; color: #fff; }
    .names th { height: 22px; line-height: 10px; }
    .names sup, .names sub { font-size: 5px; line-height: 0; }
    tbody th { background: #e9e9ea; }
    tbody td, tbody th { height: 10px; line-height: 9px; }
    td { text-align: right; }
    td.left { text-align: left; }
    .mat { display: flex; align-items: center; gap: 2px; margin: 0 -1px; }
    .swatch { flex: none; width: 8px; height: 8px; box-sizing: border-box; border: 1px solid #5a4030; }
    .orange { background: #ff8000; } .pink { background: #ff0f87; }
    .focus { outline: 1px dashed #a0a0a0; outline-offset: -1px; }
  `;

  private mat(tone: string) {
    return html`<span class="mat"><span class="swatch ${tone}"></span>Steel S 235 | DIN 18800:1990-11</span>`;
  }

  private values() {
    return html`${["21000.00", "8100.00", "0.296", "78.50", "1.20E-05", "1.10"].map((v) => html`<td>${v}</td>`)}
      <td class="left">Isotropic Linear Elastic</td>`;
  }

  render() {
    return html`<table>
      <colgroup>
        <col class="no"><col class="a"><col class="w65"><col class="w60"><col class="w61"><col class="w61"><col class="w65"><col class="w61"><col>
      </colgroup>
      <thead>
        <tr class="letters">
          <th rowspan="2" class="corner">Material<br>No.</th>
          <th class="sel">A</th><th>B</th><th>C</th><th>D</th><th>E</th><th>F</th><th>G</th><th></th>
        </tr>
        <tr class="names">
          <th>Material<br>Description</th>
          <th>Modulus of Elasticity<br>E [kN/cm<sup>2</sup>]</th>
          <th>Shear Modulus<br>G [kN/cm<sup>2</sup>]</th>
          <th>Poisson's Ratio<br>ν [-]</th>
          <th>Specific Weight<br>γ [kN/m<sup>3</sup>]</th>
          <th>Coeff. of Th. Exp.<br>α [1/°C]</th>
          <th>Partial Factor<br>γ<sub>M</sub> [-]</th>
          <th></th>
        </tr>
      </thead>
      <tbody>
        <tr><th>1</th><td class="left">${this.mat("orange")}</td>${this.values()}</tr>
        <tr><th class="sel">2</th><td class="left focus">${this.mat("pink")}</td>${this.values()}</tr>
        <tr><th>3</th><td></td><td></td><td></td><td></td><td></td><td></td><td></td><td></td></tr>
      </tbody>
    </table>`;
  }
}

/* Label with "_" before its access key */
const menus = ["_File", "_Edit", "_View", "_Insert", "_Calculate", "_Results", "_Tools", "Ta_ble", "_Options", "_Add-on Modules", "_Window", "_Help"];

@customElement("app-root")
class AppRoot extends LitElement {
  static styles = css`
    :host { display: flex; flex-direction: column; height: 100vh; overflow: hidden; background: #dde1ec;
      font: 7px/10px Roboto, "Open Sans", sans-serif; color: #111; }
    .title { display: flex; align-items: center; gap: 3px; height: 15px; flex: none; padding: 0 1px; background: #fff; }
    .title .icon { width: 11px; height: 11px; }
    .title h1 { margin: 0; font: inherit; }
    nav { display: flex; align-items: center; gap: 10px; height: 15px; flex: none; padding-left: 5px; background: #d0d4dc; }
    nav .icon { width: 12px; height: 10px; margin-right: -4px; }
    nav button { padding: 0; border: 0; background: none; font: inherit; color: #3f454f; }
    nav u { text-underline-offset: 1px; }
    tool-bar { flex: none; }
    .work { flex: 1; min-height: 0; display: grid; grid-template-columns: 180px minmax(0, 1fr); grid-template-rows: minmax(0, 1fr); }
    .right { display: flex; flex-direction: column; min-width: 0; min-height: 0; }
    model-view { flex: 1; }
    .dock { flex: none; overflow: hidden; display: flex; flex-direction: column; border-top: 1px solid #b5b9c2; }
    .dock h2 { margin: 4px 0 0; padding-left: 2px; font: inherit; line-height: 12px; background: #b9c1cc; color: #3a4250; flex: none; }
    .dock material-table { height: 62px; box-sizing: border-box; }
  `;

  render() {
    return html`
      <div class="title">${icon("app")}<h1>RFEM 5.26.01 x64 - [Bicycle*]</h1></div>
      <nav aria-label="Menu">
        ${icon("mdi")}
        ${menus.map((m) => {
          const at = m.indexOf("_");
          return html`<button>${m.slice(0, at)}<u>${m[at + 1]}</u>${m.slice(at + 2)}</button>`;
        })}
      </nav>
      <tool-bar .items=${mainBar}></tool-bar>
      <tool-bar dense .items=${editBar}></tool-bar>
      <div class="work">
        <project-navigator></project-navigator>
        <div class="right">
          <model-view></model-view>
          <section class="dock">
            <h2>1.3 Materials</h2>
            <tool-bar inset .items=${tableBar}></tool-bar>
            <material-table></material-table>
          </section>
        </div>
      </div>`;
  }
}
